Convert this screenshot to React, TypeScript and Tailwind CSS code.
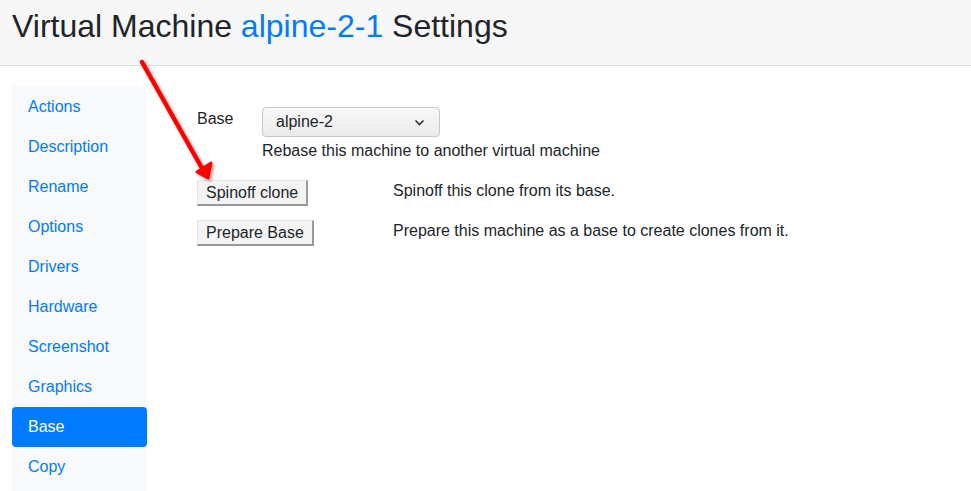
const NAV = [
  'Actions',
  'Description',
  'Rename',
  'Options',
  'Drivers',
  'Hardware',
  'Screenshot',
  'Graphics',
  'Base',
  'Copy',
];

function Arrow() {
  // annotation overlay drawn on top of the page
  return (
    <svg className="absolute left-0 top-0 pointer-events-none" width="260" height="200" viewBox="0 0 260 200">
      <defs>
        <filter id="sh" x="-20%" y="-20%" width="140%" height="140%">
          <feDropShadow dx="2" dy="2" stdDeviation="1.5" floodColor="#000" floodOpacity="0.35" />
        </filter>
      </defs>
      <g filter="url(#sh)">
        <line x1="142" y1="62" x2="203" y2="170" stroke="#f00" strokeWidth="4.5" strokeLinecap="round" />
        <polygon points="208,178 197,172 211,163" fill="#f00" stroke="#f00" strokeWidth="3" strokeLinejoin="round" />
      </g>
    </svg>
  );
}

function Button({ children }: { children: string }) {
  return (
    <button className="h-[26px] px-[8px] bg-[#f4f4f4] text-[#212529] text-[16px] leading-none border border-t-[#e3e3e3] border-l-[#e3e3e3] border-r-[#999] border-b-[#999] border-r-2 border-b-2">
      {children}
    </button>
  );
}

export default function App() {
  return (
    <div className="relative w-[971px] h-[491px] overflow-hidden bg-white text-[#212529] font-['Liberation_Sans',Arial,sans-serif] flex flex-col">
      <header className="h-[66px] shrink-0 bg-[#f7f7f7] border-b border-[#dcdcdc] px-[12px] pt-[7px]">
        <h1 className="text-[32px] leading-[38px]">
          Virtual Machine <span className="text-[#007bff]">alpine-2-1</span> Settings
        </h1>
      </header>

      <div className="flex flex-1 pt-[20px] px-[12px]">
        <nav className="w-[135px] bg-[#f8f9fa] flex flex-col pt-[1px]">
          {NAV.map((n) => (
            <div
              key={n}
              className={
                n === 'Base'
                  ? 'h-[40px] flex items-center px-[16px] text-[16px] rounded-[4px] bg-[#007bff] text-white'
                  : 'h-[40px] flex items-center px-[16px] text-[16px] text-[#007bff]'
              }
            >
              {n}
            </div>
          ))}
        </nav>

        <main className="ml-[50px] pt-[21px] flex flex-col">
          <div className="flex">
            <div className="w-[65px] text-[16px]">Base</div>
            <div className="flex flex-col">
              <div className="w-[178px] h-[30px] rounded-[4px] border border-[#c8c8c8] bg-gradient-to-b from-[#f8f8f8] to-[#ebebeb] flex items-center justify-between pl-[13px] pr-[14px] text-[16px]">
                <span>alpine-2</span>
                <svg width="11" height="7" viewBox="0 0 11 7">
                  <path d="M1.5 1.5 L5.5 5.5 L9.5 1.5" fill="none" stroke="#333" strokeWidth="1.6" />
                </svg>
              </div>
              <div className="mt-[5px] text-[16px] leading-[18px]">Rebase this machine to another virtual machine</div>
            </div>
          </div>

          <div className="flex items-center mt-[20px]">
            <div className="w-[196px]">
              <Button>Spinoff clone</Button>
            </div>
            <span className="text-[16px] -mt-[4px]">Spinoff this clone from its base.</span>
          </div>

          <div className="flex items-center mt-[14px]">
            <div className="w-[196px]">
              <Button>Prepare Base</Button>
            </div>
            <span className="text-[16px] -mt-[4px]">Prepare this machine as a base to create clones from it.</span>
          </div>
        </main>
      </div>

      <Arrow />
    </div>
  );
}
